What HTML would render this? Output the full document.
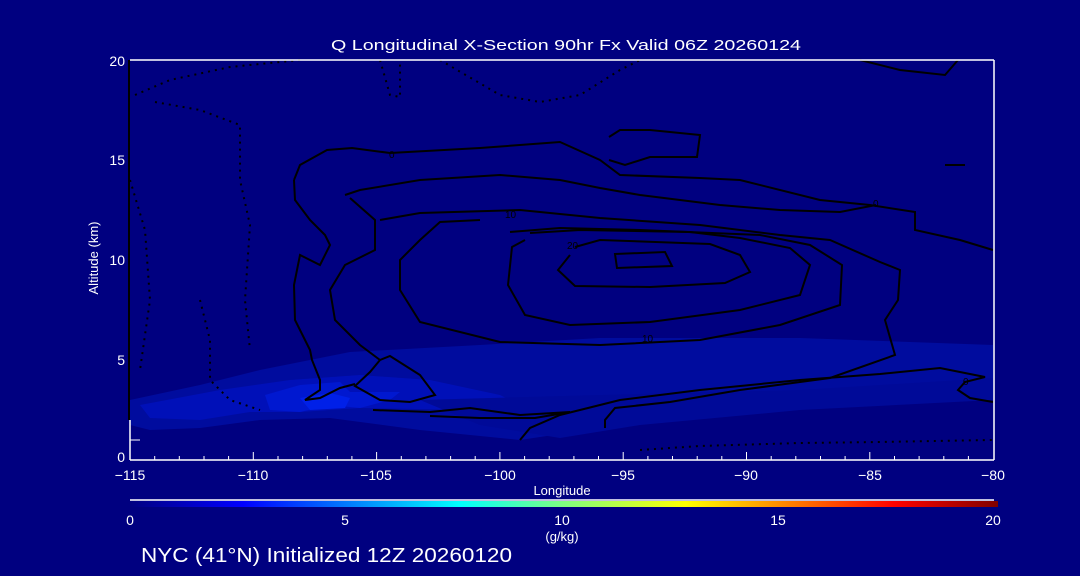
<!DOCTYPE html>
<html><head><meta charset="utf-8"><style>
html,body{margin:0;padding:0;background:#000080;width:1080px;height:576px;overflow:hidden}
svg{display:block}
text{font-family:"Liberation Sans","DejaVu Sans",sans-serif;fill:#fff}
</style></head><body>
<svg width="1080" height="576" viewBox="0 0 1080 576" xmlns="http://www.w3.org/2000/svg">
<defs>
<linearGradient id="cb" x1="0" x2="1" y1="0" y2="0">
<stop offset="0" stop-color="#000080"/>
<stop offset="0.13" stop-color="#0000ff"/>
<stop offset="0.38" stop-color="#00ffff"/>
<stop offset="0.5" stop-color="#80ff80"/>
<stop offset="0.64" stop-color="#ffff00"/>
<stop offset="0.88" stop-color="#ff0000"/>
<stop offset="1" stop-color="#800000"/>
</linearGradient>
</defs>
<rect width="1080" height="576" fill="#000080"/>
<path d="M130 400 L200 385 L260 370 L350 352 L480 345 L600 338 L800 338 L993 345 L993 385 L850 395 L700 410 L600 428 L520 440 L420 430 L330 418 L260 420 L200 428 L150 430 L130 425Z" fill="#000c9e"/>
<path d="M140 405 L220 390 L290 380 L360 375 L430 380 L500 395 L520 405 L470 410 L360 408 L300 412 L250 412 L200 420 L150 418Z" fill="#0010b8"/>
<path d="M265 395 L300 385 L340 382 L350 392 L400 392 L390 400 L360 408 L330 405 L300 412 L270 410Z" fill="#0018d0"/>
<path d="M300 398 L330 393 L350 398 L345 408 L310 410Z" fill="#0020e8"/>
<path d="M420 400 L600 395 L800 390 L993 378 L993 400 L800 410 L640 425 L560 438 L480 425Z" fill="#000a98"/>
<g fill="none" stroke="#000" stroke-width="2">
<path d="M294 180 L300 165 L327 150 L352 148 L390 153 L480 148 L560 142 L600 160 L620 175 L700 178 L740 180 L820 200 L870 205 L915 212 L915 230 L960 240 L993 250"/>
<path d="M609 137 L620 130 L650 130 L700 135 L697 157 L650 157 L625 165 L609 160"/>
<path d="M294 180 L295 200 L310 220 L325 235 L330 245 L320 265 L300 255 L294 285 L295 320 L310 350 L312 360 L320 380 L320 390 L305 400 L320 398 L340 388 L355 384"/>
<path d="M345 195 L360 190 L420 180 L500 175 L560 180 L600 188 L640 195 L720 205 L780 210 L840 212 L876 205"/>
<path d="M350 198 L375 220 L375 250 L345 265 L330 290 L335 320 L360 345 L380 360"/>
<path d="M380 220 L420 213 L520 210 L600 218 L700 225 L780 235 L830 240 L880 262 L900 270 L898 300 L885 320 L895 355 L830 378 L740 390 L670 402 L615 408 L605 420 L605 428"/>
<path d="M480 220 L440 222 L420 240 L400 260 L400 290 L420 322 L500 342 L600 345 L700 340 L780 325 L840 305 L842 265 L810 245 L760 235 L640 230 L560 228 L510 232"/>
<path d="M525 240 L512 247 L508 285 L525 315 L570 325 L650 322 L740 310 L800 295 L810 265 L790 248 L740 238 L690 232 L580 230 L530 233"/>
<path d="M570 255 L558 270 L575 286 L650 287 L725 283 L750 272 L740 255 L710 244 L600 240 L575 247"/>
<path d="M615 254 L665 252 L672 266 L617 268Z"/>
<path d="M380 360 L390 356 L420 375 L435 395 L410 402 L380 400 L355 386 L370 372 L380 360"/>
<path d="M373 410 L430 412 L470 408 L520 415 L570 412 L535 418 L480 418 L430 416"/>
<path d="M520 440 L530 428 L560 415 L620 400 L700 390 L800 380 L880 374 L940 368 L985 377 L965 382 L958 390 L970 398 L993 402"/>
<path d="M860 60 L900 70 L945 75 L958 60"/>
<path d="M945 165 L965 165"/>
</g>
<g fill="none" stroke="#000" stroke-width="2" stroke-dasharray="2 5">
<path d="M135 95 L170 80 L230 67 L300 60"/>
<path d="M155 102 L200 110 L240 125 L240 180 L250 225 L245 300 L250 350"/>
<path d="M130 180 L145 230 L150 300 L140 370"/>
<path d="M380 60 L390 95 L400 97 L400 60"/>
<path d="M440 60 L500 95 L540 102 L580 95 L620 70 L640 60"/>
<path d="M200 300 L210 340 L210 380 L230 400 L260 410"/>
<path d="M640 450 L700 446 L800 443 L880 442 L993 440"/>
</g>
<g font-size="10">
<text x="389" y="158" style="fill:#000">0</text>
<text x="505" y="218" style="fill:#000">10</text>
<text x="567" y="249" style="fill:#000">20</text>
<text x="642" y="342" style="fill:#000">10</text>
<text x="873" y="207" style="fill:#000">0</text>
<text x="963" y="385" style="fill:#000">0</text>
</g>
<line x1="130" y1="60" x2="994" y2="60" stroke="#fff" stroke-width="1.5"/>
<line x1="994" y1="60" x2="994" y2="460" stroke="#fff" stroke-width="1.5"/>
<line x1="130" y1="460" x2="994" y2="460" stroke="#fff" stroke-width="1.5"/>
<line x1="129" y1="60" x2="129" y2="420" stroke="#000" stroke-width="2"/>
<line x1="130" y1="420" x2="130" y2="460" stroke="#fff" stroke-width="1.5"/>
<line x1="130" y1="440" x2="140" y2="440" stroke="#fff" stroke-width="1"/>
<g stroke="#fff" stroke-width="1">
<path d="M130 460v-8M154.7 460v-4M179.3 460v-4M204 460v-4M228.6 460v-4M253.3 460v-8M278 460v-4M302.6 460v-4M327.3 460v-4M351.9 460v-4M376.6 460v-8M401.3 460v-4M425.9 460v-4M450.6 460v-4M475.2 460v-4M499.9 460v-8M524.6 460v-4M549.2 460v-4M573.9 460v-4M598.5 460v-4M623.2 460v-8M647.9 460v-4M672.5 460v-4M697.2 460v-4M721.8 460v-4M746.5 460v-8M771.2 460v-4M795.8 460v-4M820.5 460v-4M845.1 460v-4M869.8 460v-8M894.5 460v-4M919.1 460v-4M943.8 460v-4M968.4 460v-4"/>
</g>
<g font-size="14">
<text x="331" y="50" font-size="15" textLength="470" lengthAdjust="spacingAndGlyphs">Q Longitudinal X-Section 90hr  Fx Valid 06Z 20260124</text>
<text x="125" y="66" text-anchor="end">20</text>
<text x="125" y="165" text-anchor="end">15</text>
<text x="125" y="265" text-anchor="end">10</text>
<text x="125" y="365" text-anchor="end">5</text>
<text x="125" y="462" text-anchor="end">0</text>
<text x="130" y="480" text-anchor="middle">−115</text>
<text x="253" y="480" text-anchor="middle">−110</text>
<text x="376" y="480" text-anchor="middle">−105</text>
<text x="500" y="480" text-anchor="middle">−100</text>
<text x="623" y="480" text-anchor="middle">−95</text>
<text x="746" y="480" text-anchor="middle">−90</text>
<text x="870" y="480" text-anchor="middle">−85</text>
<text x="993" y="480" text-anchor="middle">−80</text>
<text x="562" y="495" text-anchor="middle" font-size="13">Longitude</text>
<text x="98" y="258" text-anchor="middle" font-size="13" transform="rotate(-90 98 258)">Altitude (km)</text>
<text x="130" y="525" text-anchor="middle">0</text>
<text x="345" y="525" text-anchor="middle">5</text>
<text x="562" y="525" text-anchor="middle">10</text>
<text x="778" y="525" text-anchor="middle">15</text>
<text x="993" y="525" text-anchor="middle">20</text>
<text x="562" y="541" text-anchor="middle" font-size="13">(g/kg)</text>
<text x="141" y="562" font-size="20" textLength="371" lengthAdjust="spacingAndGlyphs">NYC (41°N) Initialized 12Z 20260120</text>
</g>
<line x1="130" y1="500" x2="994" y2="500" stroke="#fff" stroke-width="1.5"/>
<rect x="130" y="501" width="868" height="6" fill="url(#cb)"/>
</svg>
</body></html>
